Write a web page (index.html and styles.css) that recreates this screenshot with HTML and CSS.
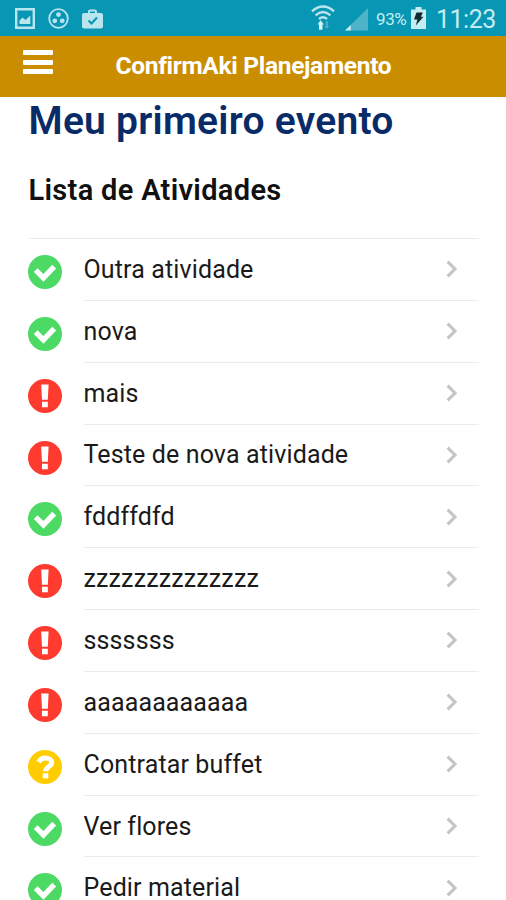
FILE: index.html
```html
<!DOCTYPE html>
<html lang="pt-BR">
<head>
<meta charset="utf-8">
<title>ConfirmAki Planejamento</title>
<link rel="stylesheet" href="styles.css">
</head>
<body>
<svg class="defs" aria-hidden="true">
  <symbol id="ok" viewBox="0 0 34 34"><circle cx="17" cy="17" r="17" fill="#4cd964"/><path d="M7.7 15.2l7.7 7.6L26.2 11.6" fill="none" stroke="#fff" stroke-width="5.4"/></symbol>
  <symbol id="alert" viewBox="0 0 34 34"><circle cx="17" cy="17" r="17" fill="#ff3b30"/><path d="M13.2 5.5h7.4l-.8 15.2h-5.8zM14 22.8h5.8v5.4h-5.8z" fill="#fff"/></symbol>
  <symbol id="ask" viewBox="0 0 34 34"><circle cx="17" cy="17" r="17" fill="#fc0"/><path d="M10.6 12.2C12.2 9 14.1 8 17 8c3.9 0 6.7 2 6.7 4.6 0 4-6 4.3-6 8.6" fill="none" stroke="#fff" stroke-width="5"/><path d="M14.8 23.3h5.5v5.1h-5.5z" fill="#fff"/></symbol>
  <symbol id="next" viewBox="0 0 12 18"><path d="M1.6 1.6L9 9l-7.4 7.4" fill="none" stroke="#c5c5c9" stroke-width="3.1"/></symbol>
</svg>
<header class="status">
  <div class="notices">
    <svg width="20" height="21" viewBox="0 0 20 21"><path d="M1.2 1.2h17.6v18.6H1.2z" fill="none" stroke="#b8e5ee" stroke-width="2.4"/><path d="M4.5 16v-3.5l3-3 3 2.5 4.8-4.5V16z" fill="#b8e5ee"/></svg>
    <svg width="21" height="21" viewBox="0 0 21 21"><circle cx="10.5" cy="10.5" r="9.3" fill="none" stroke="#b8e5ee" stroke-width="1.8"/><g fill="#b8e5ee"><circle cx="10.5" cy="6.6" r="2.4"/><circle cx="6.8" cy="12.8" r="2.4"/><circle cx="14.2" cy="12.8" r="2.4"/></g></svg>
    <svg width="21" height="20" viewBox="0 0 21 20"><path d="M7 5V2.6Q7 1.5 8.1 1.5h4.8Q14 1.5 14 2.6V5" fill="none" stroke="#b8e5ee" stroke-width="2"/><rect y="4" width="21" height="15.5" rx="2" fill="#b8e5ee"/><path d="M6.5 11.5l3 3 5.5-6" fill="none" stroke="#0796b4" stroke-width="2"/></svg>
  </div>
  <div class="system">
    <svg class="wifi" width="24" height="26" viewBox="0 0 24 26"><g fill="none" stroke="#b8e5ee" stroke-width="2.4"><path d="M1 6.3Q12-3.2 23 6.3"/><path d="M4.6 10.3q7.4-6.6 14.8 0"/><path d="M8 14q4-3.6 8 0"/></g><path d="M9.5 15.2l3.4 4.2h-1.4v5.4H8v-5.4H6.6z" fill="#d8f4f8"/><path d="M15.8 24l-2.5-3h1.4v-5h2.2v5h1.4z" fill="#4bb1c7"/></svg>
    <svg class="signal" width="23" height="23" viewBox="0 0 23 23"><path d="M23 0v22.5H0z" fill="#50b4c9"/><path d="M5.8 17v5.5H0z" fill="#c2ebf1"/></svg>
    <span class="percent">93%</span>
    <svg class="battery" width="15" height="22" viewBox="0 0 15 22"><path d="M4.5 0h6v2.5H15V22H0V2.5h4.5z" fill="#c5edf2"/><path d="M5.5 5.5h6.4L9.8 9.7h2.7l-7.7 8.8 1.6-6H3z" fill="#102a31"/></svg>
    <span class="clock">11:23</span>
  </div>
</header>
<nav class="bar">
  <div class="menu"><i></i><i></i><i></i></div>
  <span class="bar-title">ConfirmAki Planejamento</span>
</nav>
<main>
  <h1>Meu primeiro evento</h1>
  <h2>Lista de Atividades</h2>
  <ul class="list">
    <li><svg class="state"><use href="#ok"/></svg><div class="item"><span>Outra atividade</span><svg class="next"><use href="#next"/></svg></div></li>
    <li><svg class="state"><use href="#ok"/></svg><div class="item"><span>nova</span><svg class="next"><use href="#next"/></svg></div></li>
    <li><svg class="state"><use href="#alert"/></svg><div class="item"><span>mais</span><svg class="next"><use href="#next"/></svg></div></li>
    <li><svg class="state"><use href="#alert"/></svg><div class="item"><span>Teste de nova atividade</span><svg class="next"><use href="#next"/></svg></div></li>
    <li><svg class="state"><use href="#ok"/></svg><div class="item"><span>fddffdfd</span><svg class="next"><use href="#next"/></svg></div></li>
    <li><svg class="state"><use href="#alert"/></svg><div class="item"><span>zzzzzzzzzzzzzz</span><svg class="next"><use href="#next"/></svg></div></li>
    <li><svg class="state"><use href="#alert"/></svg><div class="item"><span>sssssss</span><svg class="next"><use href="#next"/></svg></div></li>
    <li><svg class="state"><use href="#alert"/></svg><div class="item"><span>aaaaaaaaaaaa</span><svg class="next"><use href="#next"/></svg></div></li>
    <li><svg class="state"><use href="#ask"/></svg><div class="item"><span>Contratar buffet</span><svg class="next"><use href="#next"/></svg></div></li>
    <li><svg class="state"><use href="#ok"/></svg><div class="item"><span>Ver flores</span><svg class="next"><use href="#next"/></svg></div></li>
    <li><svg class="state"><use href="#ok"/></svg><div class="item"><span>Pedir material</span><svg class="next"><use href="#next"/></svg></div></li>
  </ul>
</main>
</body>
</html>
```
FILE: styles.css
```css
* { box-sizing: border-box; }
html, body { height: 900px; overflow: hidden; }
body { margin: 0; background: #fff; color: #1a1a1a; font-family: Roboto, "Liberation Sans", sans-serif; display: flex; flex-direction: column; }
svg { display: block; flex: none; }
.defs { width: 0; height: 0; position: absolute; }
.status { flex: none; height: 36px; background: #0796b4; display: flex; justify-content: space-between; padding: 0 10px 0 15px; color: #c5edf2; }
.notices { display: flex; gap: 13px; align-items: center; padding-top: 1px; }
.system { display: flex; align-items: center; white-space: nowrap; }
.wifi { margin-right: 10px; }
.signal { margin: 2px 8px 0 0; }
.percent { font-size: 17px; width: 35px; padding-top: 2px; letter-spacing: -0.4px; }
.battery { margin-right: 10px; }
.clock { font-size: 25px; line-height: 36px; width: 60px; padding-top: 4px; letter-spacing: -0.5px; }
.bar { flex: none; height: 61px; background: #cb8d00; display: flex; align-items: flex-start; }
.menu { width: 92.5px; padding: 14px 0 0 23px; display: flex; flex-direction: column; gap: 4.5px; }
.menu i { display: block; width: 29.5px; height: 5px; border-radius: 1px; background: #fff; }
.bar-title { margin-left: 23px; color: #fff; font-weight: 700; font-size: 24.5px; line-height: 60px; letter-spacing: -0.31px; white-space: nowrap; }
main { padding: 0 27px 0 28.5px; }
h1, h2 { margin: 0; white-space: nowrap; }
h1 { height: 64px; line-height: 49px; font-size: 39px; font-weight: 600; color: #092b68; letter-spacing: 0.25px; }
h2 { height: 77px; line-height: 58px; font-size: 29px; font-weight: 600; color: #111; letter-spacing: 0.32px; }
.list { margin: 0; padding: 0; list-style: none; border-top: 1.5px solid #ebebec; }
.list li { height: 61.85px; display: flex; }
.state { width: 34px; height: 34px; margin: 16px 21.5px 0 -0.5px; }
.item { flex: 1; display: flex; justify-content: space-between; align-items: center; padding: 0 21px 0 0; border-bottom: 1.5px solid #ebebec; font-size: 25px; letter-spacing: 0.13px; white-space: nowrap; }
.next { width: 12px; height: 18px; }
```
